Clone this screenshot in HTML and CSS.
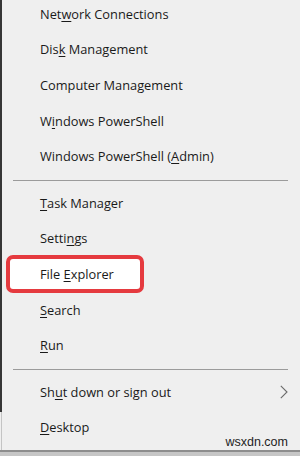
FILE: index.html
```html
<!DOCTYPE html>
<html>
<head>
<meta charset="utf-8">
<link rel="stylesheet" href="styles.css">
</head>
<body>
<div class="screen">
  <ul class="menu">
    <li class="item"><span>Net<u>w</u>ork Connections</span></li>
    <li class="item"><span>Dis<u>k</u> Management</span></li>
    <li class="item"><span>Computer Management</span></li>
    <li class="item"><span>W<u>i</u>ndows PowerShell</span></li>
    <li class="item"><span>Windows PowerShell (<u>A</u>dmin)</span></li>
    <li class="sep"></li>
    <li class="item"><span><u>T</u>ask Manager</span></li>
    <li class="item"><span>Setti<u>n</u>gs</span></li>
    <li class="item item-marked"><span class="mark"><span>File <u>E</u>xplorer</span></span></li>
    <li class="item"><span><u>S</u>earch</span></li>
    <li class="item"><span><u>R</u>un</span></li>
    <li class="sep"></li>
    <li class="item has-sub"><span>Sh<u>u</u>t down or sign out</span>
      <svg class="chev" width="8" height="14" viewBox="0 0 8 14"><polyline points="0.8,0.8 7,7 0.8,13.2" fill="none" stroke="#6a6a6a" stroke-width="1.1"/></svg>
    </li>
    <li class="item"><span><u>D</u>esktop</span></li>
  </ul>
  <div class="watermark">wsxdn.com</div>
</div>
</body>
</html>
```

FILE: styles.css
```css
html, body {
  margin: 0;
  padding: 0;
}
body {
  width: 300px;
  height: 456px;
  background: #c6c6c6;
  overflow: hidden;
  font-family: "Open Sans", "Noto Sans", sans-serif;
}
.screen {
  position: relative;
  height: 452px;
  box-sizing: border-box;
  background: #efefef;
  border-bottom: 2px solid #8d8d8d;
  overflow: hidden;
}
.screen::before {
  content: "";
  position: absolute;
  left: 0;
  top: 0;
  width: 2px;
  height: 412px;
  background: #363636;
}
.screen::after {
  content: "";
  position: absolute;
  left: 1px;
  top: 412px;
  width: 1px;
  height: 40px;
  background: #c4c4c4;
}
.menu {
  list-style: none;
  margin: -4px 0 0 0;
  padding: 0;
}
.item {
  height: 35.6px;
  display: flex;
  align-items: center;
  padding-left: 40px;
  padding-right: 12px;
  font-size: 12.8px;
  color: #1a1a1a;
  white-space: pre;
}
.item u {
  text-decoration-thickness: 1px;
  text-underline-offset: 2px;
}
.sep {
  height: 1px;
  background: #9b9b9b;
  margin: 6px 12px 4px 13px;
}
.item-marked {
  padding-left: 6px;
}
.mark {
  box-sizing: border-box;
  width: 138px;
  height: 38px;
  flex: none;
  display: flex;
  align-items: center;
  padding-left: 30px;
  border: 4px solid #e53a3f;
  border-radius: 7px;
  background: #ffffff;
}
.has-sub {
  justify-content: space-between;
}
.chev {
  display: block;
}
.watermark {
  position: absolute;
  right: 12px;
  bottom: 1px;
  font-family: "Liberation Sans", Arial, sans-serif;
  font-size: 12.5px;
  color: #1e1e1e;
}
```
